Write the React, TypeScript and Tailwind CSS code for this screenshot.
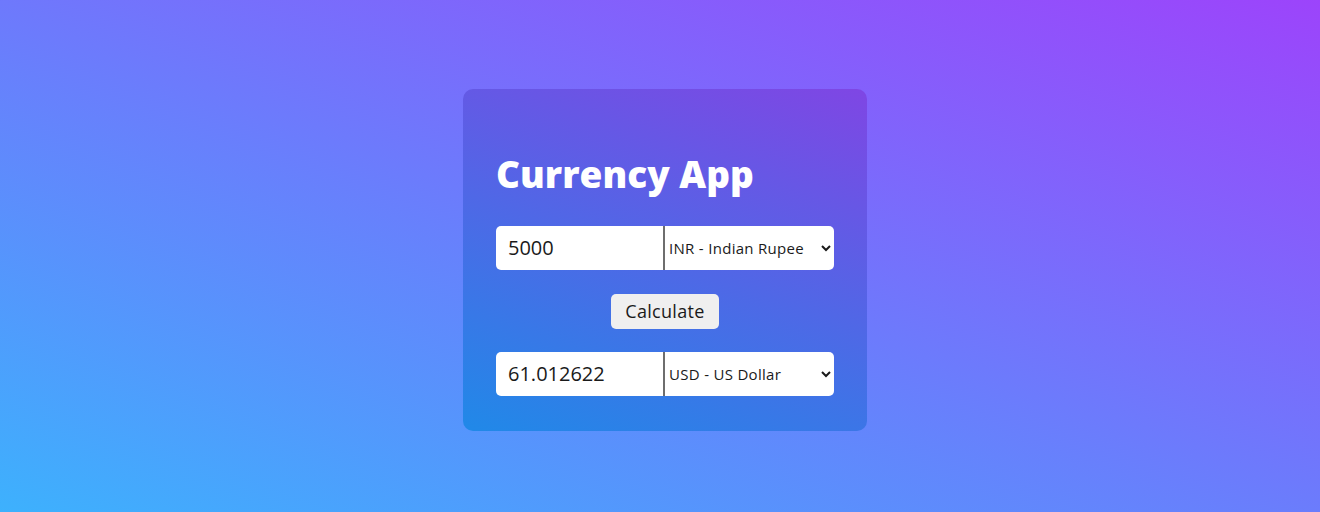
import React, { useState } from "react";

const currencies = [
  { code: "INR", name: "Indian Rupee" },
  { code: "USD", name: "US Dollar" },
  { code: "EUR", name: "Euro" },
  { code: "GBP", name: "British Pound" },
  { code: "JPY", name: "Japanese Yen" },
];

const font = { fontFamily: '"Open Sans", Inter, sans-serif' };

const CurrencyRow: React.FC<{
  value: string;
  currency: string;
  onValue: (v: string) => void;
  onCurrency: (c: string) => void;
}> = ({ value, currency, onValue, onCurrency }) => (
  <div className="flex h-[44px] w-full">
    <input
      type="text"
      value={value}
      onChange={(e) => onValue(e.target.value)}
      className="w-[169px] min-w-0 rounded-l-[5px] border-r-2 border-[#6e6e6e] bg-white pl-3 text-[20px] text-[#1a1a1a] outline-none"
    />
    <select
      value={currency}
      onChange={(e) => onCurrency(e.target.value)}
      className="min-w-0 flex-1 rounded-r-[5px] bg-white pl-0 pr-2 text-[15px] tracking-[0.3px] text-[#1a1a1a] outline-none"
    >
      {currencies.map((c) => (
        <option key={c.code} value={c.code}>
          {c.code} - {c.name}
        </option>
      ))}
    </select>
  </div>
);

export default function App() {
  const [amount, setAmount] = useState("5000");
  const [from, setFrom] = useState("INR");
  const [to, setTo] = useState("USD");
  const [result, setResult] = useState("61.012622");

  return (
    <div
      style={font}
      className="flex h-[512px] w-full items-center justify-center bg-linear-[20deg] from-[#3db1fd] to-[#9c44fb] pl-[10px] pt-[8px]"
    >
      <div className="w-[404px] rounded-[10px] bg-linear-[19deg] from-[#2089e8] to-[#7f46e4] px-[33px] pt-[60px] pb-[35px]">
        <h1 className="mb-[27px] text-[37px] leading-[50px] font-extrabold text-white">
          Currency App
        </h1>
        <CurrencyRow
          value={amount}
          currency={from}
          onValue={setAmount}
          onCurrency={setFrom}
        />
        <div className="mt-[24px] mb-[23px] flex justify-center">
          <button
            onClick={() => setResult(result)}
            className="h-[35px] rounded-[5px] bg-[#efefef] px-[14px] text-[18px] tracking-[0.3px] text-[#1a1a1a]"
          >
            Calculate
          </button>
        </div>
        <CurrencyRow
          value={result}
          currency={to}
          onValue={setResult}
          onCurrency={setTo}
        />
      </div>
    </div>
  );
}
